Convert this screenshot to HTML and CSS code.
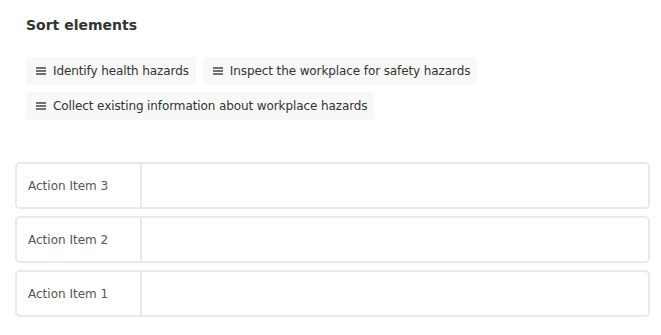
FILE: index.html
```html
<!DOCTYPE html>
<html lang="en">
<head>
<meta charset="UTF-8">
<meta name="viewport" content="width=device-width, initial-scale=1.0">
<title>Sort elements</title>
<link rel="stylesheet" href="styles.css">
</head>
<body>

<div class="sort-panel">
    <h2 class="sort-title">Sort elements</h2>

    <!-- Draggable elements -->
    <div class="chip-list">
        <div class="chip"><svg class="handle" viewBox="0 0 10 8"><path d="M0 1h10M0 4h10M0 7h10"/></svg>Identify health hazards</div>
        <div class="chip"><svg class="handle" viewBox="0 0 10 8"><path d="M0 1h10M0 4h10M0 7h10"/></svg>Inspect the workplace for safety hazards</div>
        <div class="chip"><svg class="handle" viewBox="0 0 10 8"><path d="M0 1h10M0 4h10M0 7h10"/></svg>Collect existing information about workplace hazards</div>
    </div>
</div>

<!-- Drop targets -->
<div class="slot-list">
    <div class="slot">
        <div class="slot-label">Action Item 3</div>
        <div class="slot-drop"></div>
    </div>
    <div class="slot">
        <div class="slot-label">Action Item 2</div>
        <div class="slot-drop"></div>
    </div>
    <div class="slot">
        <div class="slot-label">Action Item 1</div>
        <div class="slot-drop"></div>
    </div>
</div>

</body>
</html>
```

FILE: styles.css
```css
body {
    margin: 0;
    font-family: "DejaVu Sans", Verdana, sans-serif;
    color: #333;
    background: #fff;
}
.sort-panel {
    padding: 17px 26px 0 26px;
}
.sort-title {
    margin: 0 0 24px 0;
    font-size: 14px;
    font-weight: bold;
    color: #333;
}
.chip-list {
    display: flex;
    flex-wrap: wrap;
    gap: 7px;
    width: 480px;
}
.chip {
    display: flex;
    align-items: center;
    height: 28px;
    padding: 0 7px 0 10px;
    background-color: #f8f8f8;
    border-radius: 4px;
    font-size: 12px;
    letter-spacing: -0.1px;
    color: #333;
}
.handle {
    width: 10px;
    height: 8px;
    margin-right: 7px;
    stroke: #444;
    stroke-width: 1.4;
    fill: none;
}
.slot-list {
    display: flex;
    flex-direction: column;
    gap: 7px;
    padding: 42px 11px 0 15px;
}
.slot {
    display: flex;
    height: 47px;
    border: 2px solid #e6e9ee;
    border-radius: 5px;
    box-sizing: border-box;
}
.slot-label {
    width: 125px;
    box-sizing: border-box;
    padding-left: 11px;
    display: flex;
    align-items: center;
    border-right: 2px solid #e6e9ee;
    font-size: 12px;
    color: #555;
}
.slot-drop {
    flex: 1;
}
```
